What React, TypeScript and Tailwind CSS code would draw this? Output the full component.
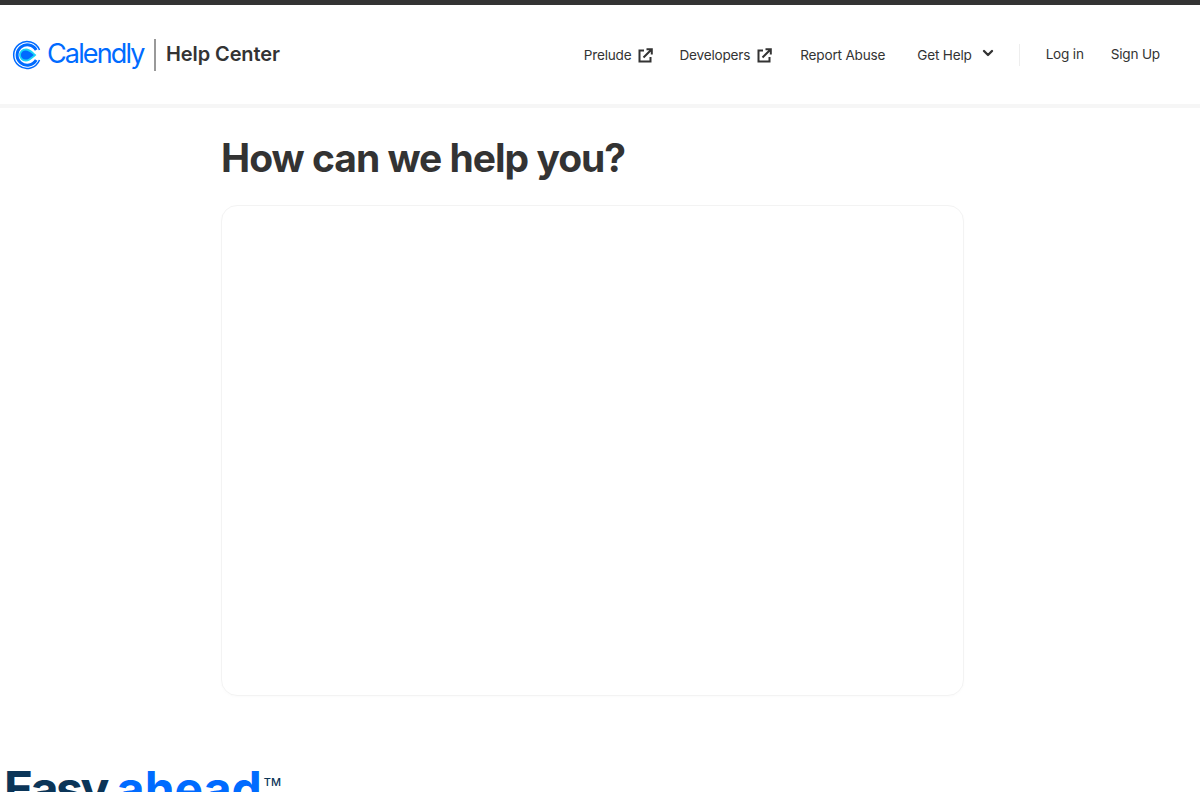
import { ChevronDown } from "lucide-react";

const font = { fontFamily: "Inter, 'Liberation Sans', sans-serif" };

function ExternalIcon() {
  return (
    <svg width="15" height="15" viewBox="0 0 15 15" fill="none" stroke="#333" strokeWidth="2" className="ml-[7px]">
      <path d="M6 2.5H1.5v11h11V9" />
      <path d="M5.5 9.5 13 2M8.5 1.2h5.3v5.3" />
    </svg>
  );
}

function CalendlyMark() {
  return (
    <svg width="30" height="30" viewBox="0 0 30 30" fill="none">
      <path d="M27.5 10A13.4 13.4 0 1 0 27.5 20" stroke="#006bff" strokeWidth="1.5" />
      <path d="M24.2 10A10.2 10.2 0 1 0 24.2 20" stroke="#006bff" strokeWidth="3" />
      <path d="M23 15C20 12.5 17.5 9.2 13.5 9.5A5.5 5.5 0 0 0 13.5 20.5C17.5 20.8 20 17.5 23 15Z" fill="#006bff" stroke="#1ad4f5" strokeWidth="1.8" />
    </svg>
  );
}

export default function App() {
  return (
    <div className="h-[792px] overflow-hidden bg-white text-[#333]" style={font}>
      <div className="h-[5px] bg-[#333]" />
      <header className="flex h-[103px] items-center border-b-[4px] border-[#f6f6f6] pl-[12px] pr-[40px]">
        <CalendlyMark />
        <span className="ml-[5px] w-[97px] text-[27px] font-normal tracking-[-1.85px] text-[#006bff]">Calendly</span>
        <div className="ml-[10px] h-[32px] w-[2px] bg-[#999]" />
        <span className="mb-[2px] ml-[10px] text-[20px] font-semibold tracking-[-0.1px]">Help Center</span>
        <nav className="ml-auto mt-[2px] flex items-center text-[13.6px] tracking-[-0.2px]">
          <a className="flex items-center">Prelude<ExternalIcon /></a>
          <a className="ml-[26px] flex items-center">Developers<ExternalIcon /></a>
          <a className="ml-[28px]">Report Abuse</a>
          <a className="ml-[32px] flex items-center">
            Get Help
            <ChevronDown size={16} strokeWidth={3.5} className="ml-[8px] -translate-y-[2px]" />
          </a>
          <div className="ml-[23px] -translate-y-px h-[22px] w-px bg-[#eeeeee]" />
          <a className="ml-[26px] -translate-y-px">Log in</a>
          <a className="ml-[27px] -translate-y-px">Sign Up</a>
        </nav>
      </header>
      <main className="ml-[221px] w-[743px]">
        <h1 className="mt-[26px] text-[39px] font-bold leading-[48px] tracking-[-1px]">How can we help you?</h1>
        <div className="mt-[23px] h-[491px] rounded-[16px] border border-[#f3f3f3] shadow-[0_1px_3px_rgba(0,0,0,0.02)]" />
      </main>
      <div className="ml-[4px] mt-[65px] flex text-[48px] font-bold leading-[56px] text-[#0b3558]">
        <span className="tracking-[-2.5px]">Easy</span>
        <span className="ml-[10px] text-[#006bff]">ahead</span>
        <span className="ml-[2px] mt-[13px] text-[11px] font-medium leading-[16px] text-[#0b3558]">TM</span>
      </div>
    </div>
  );
}
